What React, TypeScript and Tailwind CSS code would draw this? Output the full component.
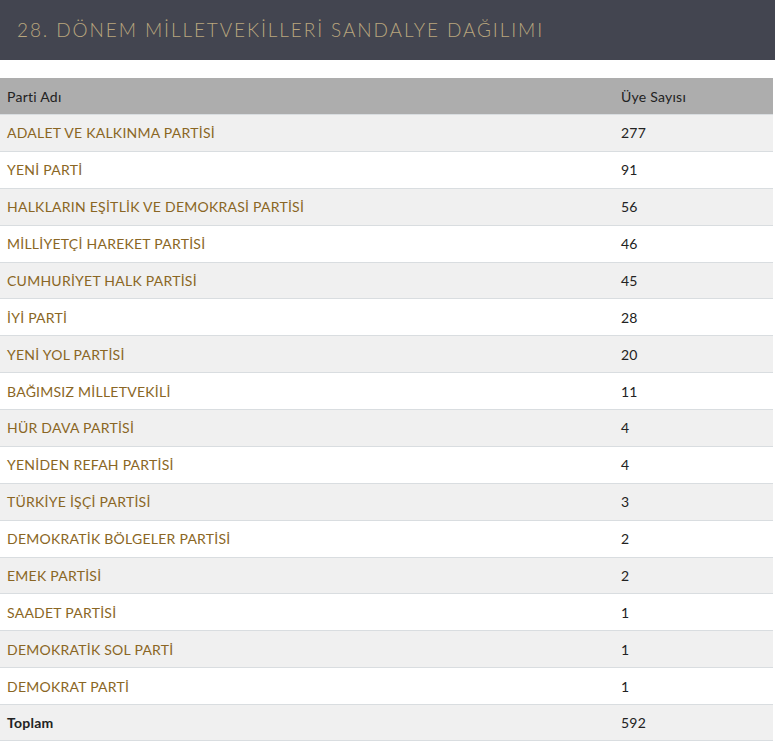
const rows = [
  { name: "ADALET VE KALKINMA PARTİSİ", count: 277 },
  { name: "YENİ PARTİ", count: 91 },
  { name: "HALKLARIN EŞİTLİK VE DEMOKRASİ PARTİSİ", count: 56 },
  { name: "MİLLİYETÇİ HAREKET PARTİSİ", count: 46 },
  { name: "CUMHURİYET HALK PARTİSİ", count: 45 },
  { name: "İYİ PARTİ", count: 28 },
  { name: "YENİ YOL PARTİSİ", count: 20 },
  { name: "BAĞIMSIZ MİLLETVEKİLİ", count: 11 },
  { name: "HÜR DAVA PARTİSİ", count: 4 },
  { name: "YENİDEN REFAH PARTİSİ", count: 4 },
  { name: "TÜRKİYE İŞÇİ PARTİSİ", count: 3 },
  { name: "DEMOKRATİK BÖLGELER PARTİSİ", count: 2 },
  { name: "EMEK PARTİSİ", count: 2 },
  { name: "SAADET PARTİSİ", count: 1 },
  { name: "DEMOKRATİK SOL PARTİ", count: 1 },
  { name: "DEMOKRAT PARTİ", count: 1 },
];

export default function App() {
  const total = rows.reduce((s, r) => s + r.count, 0);

  return (
    <div className="min-h-screen bg-white font-['Lato',sans-serif]">
      {/* Title bar */}
      <div className="flex h-[60px] items-center bg-[#434550] px-[17px]">
        <h1 className="text-[19px] font-light tracking-[1.9px] text-[#b9a67e]">
          28. DÖNEM MİLLETVEKİLLERİ SANDALYE DAĞILIMI
        </h1>
      </div>

      {/* Seats table */}
      <div className="mt-[18px] w-[773px] text-[14px] tracking-[0.25px]">
        <div className="grid h-[36px] grid-cols-[614px_1fr] items-center bg-[#adadad] px-[7px] text-[#222]">
          <span>Parti Adı</span>
          <span>Üye Sayısı</span>
        </div>
        {rows.map((r, i) => (
          <div
            key={r.name}
            className={`grid h-[36.88px] grid-cols-[614px_1fr] items-center border-t border-[#d9dde0] px-[7px] ${
              i % 2 === 0 ? "bg-[#f0f0f0]" : "bg-white"
            }`}
          >
            <span className="text-[#8a6624]">{r.name}</span>
            <span className="text-[#222]">{r.count}</span>
          </div>
        ))}
        <div className="grid h-[36.88px] grid-cols-[614px_1fr] items-center border-y border-[#d9dde0] bg-[#f0f0f0] px-[7px] text-[#222]">
          <span className="font-bold">Toplam</span>
          <span>{total}</span>
        </div>
      </div>
    </div>
  );
}
